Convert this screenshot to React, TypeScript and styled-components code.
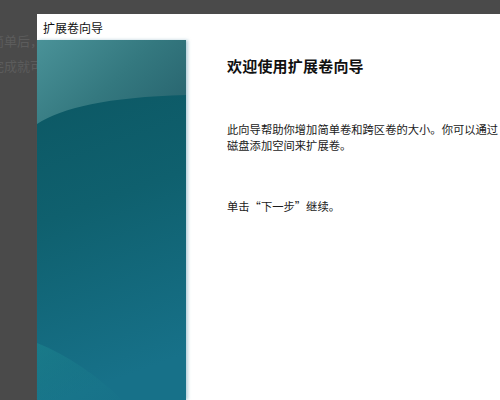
import React from "react";
import styled, { createGlobalStyle } from "styled-components";

const Global = createGlobalStyle`
  html, body { margin: 0; padding: 0; }
  body {
    width: 500px;
    height: 400px;
    overflow: hidden;
    background: #4a4a4a;
    font-family: "Noto Sans CJK SC", "Noto Sans", sans-serif;
  }
`;

const Desktop = styled.div`
  position: relative;
  width: 500px;
  height: 400px;
  overflow: hidden;
  background: #4a4a4a;
  padding-top: 28px;
  box-sizing: border-box;
`;

const BgLine = styled.div`
  font-size: 13px;
  line-height: 25px;
  color: #5c5c5c;
  white-space: nowrap;
  margin-left: -9px;
`;

const Dialog = styled.div`
  position: absolute;
  left: 37px;
  top: 14px;
  width: 580px;
  bottom: 0;
  background: #ffffff;
  display: flex;
  flex-direction: column;
`;

const TitleBar = styled.div`
  height: 26px;
  display: flex;
  align-items: center;
  padding-left: 6px;
  font-size: 12px;
  color: #111;
  flex: none;
`;

const Body = styled.div`
  flex: 1;
  display: flex;
  min-height: 0;
`;

const SidePanel = styled.div`
  width: 149px;
  flex: none;
  position: relative;
  box-shadow: 2px 0 3px rgba(120, 170, 190, 0.55);
  svg {
    display: block;
    width: 100%;
    height: 100%;
  }
`;

const Content = styled.div`
  flex: 1;
  padding: 16px 0 0 41px;
  display: flex;
  flex-direction: column;
  color: #111;
`;

const Heading = styled.div`
  font-size: 15px;
  line-height: 20px;
  font-weight: 700;
  letter-spacing: 0.2px;
`;

const Para = styled.div<{ $gap: number }>`
  margin-top: ${(p) => p.$gap}px;
  font-size: 11.3px;
  line-height: 16px;
  white-space: nowrap;
  color: #1a1a1a;
`;

function PanelArt() {
  return (
    <svg viewBox="0 0 149 360" preserveAspectRatio="none">
      <defs>
        <linearGradient id="base" x1="0" y1="0" x2="0.15" y2="1">
          <stop offset="0" stopColor="#0b5560" />
          <stop offset="0.5" stopColor="#0f606e" />
          <stop offset="1" stopColor="#177189" />
        </linearGradient>
        <linearGradient id="top" x1="0" y1="0" x2="1" y2="0.6">
          <stop offset="0" stopColor="#4a9298" />
          <stop offset="0.6" stopColor="#34787f" />
          <stop offset="1" stopColor="#2a6872" />
        </linearGradient>
        <linearGradient id="low" x1="0" y1="0" x2="1" y2="1">
          <stop offset="0" stopColor="#1d8790" stopOpacity="0.55" />
          <stop offset="1" stopColor="#1a7b8c" stopOpacity="0.1" />
        </linearGradient>
      </defs>
      <rect x="0" y="0" width="149" height="360" fill="url(#base)" />
      <path d="M0,84 C25,68 70,57 149,55 L149,0 L0,0 Z" fill="url(#top)" />
      <path d="M0,303 C30,315 60,335 85,360 L0,360 Z" fill="url(#low)" />
    </svg>
  );
}

export default function App() {
  return (
    <>
      <Global />
      <Desktop>
        <BgLine>简单后，</BgLine>
        <BgLine>完成就可</BgLine>
        <Dialog>
          <TitleBar>扩展卷向导</TitleBar>
          <Body>
            <SidePanel>
              <PanelArt />
            </SidePanel>
            <Content>
              <Heading>欢迎使用扩展卷向导</Heading>
              <Para $gap={45}>
                此向导帮助你增加简单卷和跨区卷的大小。你可以通过
                <br />
                磁盘添加空间来扩展卷。
              </Para>
              <Para $gap={45}>单击“下一步”继续。</Para>
            </Content>
          </Body>
        </Dialog>
      </Desktop>
    </>
  );
}
